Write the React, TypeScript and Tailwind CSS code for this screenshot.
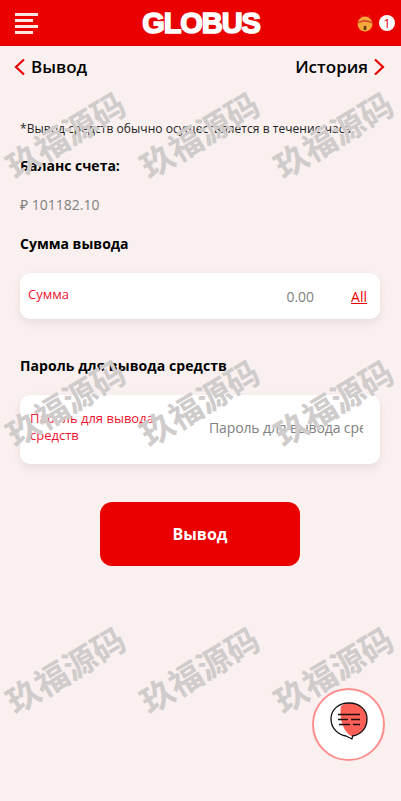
const wm = Array.from({ length: 9 });

function Menu() {
  return (
    <div className="flex w-[60px] flex-col items-start gap-[3px] pl-[15px]">
      <span className="block h-[3px] w-[23px] bg-[#ffe4e4]" />
      <span className="block h-[3px] w-[18px] bg-[#ffe4e4]" />
      <span className="block h-[3px] w-[23px] bg-[#ffe4e4]" />
      <span className="block h-[3px] w-[18px] bg-[#ffe4e4]" />
    </div>
  );
}

function Bell() {
  return (
    <svg width="16" height="18" viewBox="0 0 16 18" className="block">
      <path d="M5 3 L4 1 M11 3 L12 1" stroke="#d8342c" strokeWidth="1.2" />
      <circle cx="8" cy="10" r="7.5" fill="#f5a93a" />
      <path d="M1 8 Q8 4 15 8 L15 9.5 Q8 6 1 9.5 Z" fill="#d9482b" />
      <rect x="6.7" y="12" width="2.6" height="4" fill="#6b3a1a" />
    </svg>
  );
}

function Chevron({ right }: { right?: boolean }) {
  return (
    <svg width="12" height="18" viewBox="0 0 12 18" className="block">
      <path d={right ? "M2 1.5 L10 9 L2 16.5" : "M10 1.5 L2 9 L10 16.5"} fill="none" stroke="#eb0000" strokeWidth="2.2" />
    </svg>
  );
}

function ChatIcon() {
  return (
    <svg width="40" height="42" viewBox="0 0 40 42" className="-mt-[5px] block">
      <path d="M12 5 A16.5 16.5 0 1 1 22 35 C14 30 10 18 12 5 Z" fill="#fb5f55" />
      <path d="M20 2 C9 2 2 9 2 18 C2 28 10 34 17 35 L23 38 L23.5 35 C31 34 38 28 38 18 C38 9 31 2 20 2 Z" fill="none" stroke="#111" strokeWidth="1.3" strokeLinejoin="round" />
      <path d="M9 13.5 H31 M9 18.5 H19 M22 18.5 H31 M10 23.5 H21 M24 23.5 H31" stroke="#1b0d0d" strokeWidth="1.4" />
    </svg>
  );
}

export default function App() {
  return (
    <div className="relative h-[801px] w-[401px] overflow-hidden bg-[#f9f0ef] font-['Open_Sans','Noto_Sans',sans-serif] text-black">
      <header className="flex h-[46px] items-center justify-between bg-[#eb0000]">
        <Menu />
        <div className="pl-[1px] font-['Liberation_Sans',sans-serif] text-[29px] leading-none font-bold tracking-[-1.1px] text-white [-webkit-text-stroke:1.6px_white]">GLOBUS</div>
        <div className="flex w-[60px] items-center justify-end gap-[6px] pr-[6px]">
          <Bell />
          <span className="flex h-[16px] w-[16px] items-center justify-center rounded-full bg-white text-[13px] leading-none text-[#eb0000]">1</span>
        </div>
      </header>

      <nav className="flex h-[42px] items-center justify-between pl-[14px] pr-[16px]">
        <div className="flex items-center gap-[5px]">
          <Chevron />
          <span className="text-[17px] font-semibold">Вывод</span>
        </div>
        <div className="flex items-center gap-[5px]">
          <span className="text-[17px] font-semibold">История</span>
          <Chevron right />
        </div>
      </nav>

      <main className="pl-[20px] pr-[21px]">
        <p className="mt-[32px] text-[12px] leading-[18px] tracking-[0.05px] text-[#222]">*Вывод средств обычно осуществляется в течение часа.</p>
        <h2 className="mt-[18px] text-[14px] leading-[20px] font-bold">Баланс счета:</h2>
        <p className="mt-[19px] text-[14px] leading-[20px] text-[#808080]">₽ 101182.10</p>
        <h2 className="mt-[19px] text-[14px] leading-[20px] font-bold">Сумма вывода</h2>
        <div className="mt-[19px] flex h-[46px] items-center rounded-[10px] bg-white pl-[8px] pr-[13px] shadow-[0_4px_10px_rgba(0,0,0,0.08)]">
          <span className="-mt-[3px] text-[13px] text-[#f0142f]">Сумма</span>
          <span className="ml-auto text-[14px] text-[#808080]">0.00</span>
          <span className="ml-[37px] text-[14px] text-[#eb0000] underline">All</span>
        </div>
        <h2 className="mt-[37px] text-[14px] leading-[20px] tracking-[0.08px] font-bold">Пароль для вывода средств</h2>
        <div className="mt-[19px] flex h-[69px] items-center rounded-[10px] bg-white pl-[10px] pr-[17px] shadow-[0_4px_10px_rgba(0,0,0,0.08)]">
          <span className="-mt-[6px] w-[140px] text-[13px] leading-[17px] text-[#f0142f]">Пароль для вывода средств</span>
          <span className="-mt-[4px] ml-auto w-[154px] overflow-hidden whitespace-nowrap text-[14px] tracking-[-0.12px] text-[#808080]">Пароль для вывода средств</span>
        </div>
        <button className="mx-auto mt-[38px] flex h-[64px] w-[200px] items-center justify-center rounded-[12px] bg-[#eb0000] text-[16px] font-bold text-white">Вывод</button>
      </main>

      <div className="absolute left-[312px] top-[688px] flex h-[73px] w-[73px] items-center justify-center rounded-full border-[2px] border-[#ff8f8f] bg-white">
        <ChatIcon />
      </div>

      <div aria-hidden className="pointer-events-none absolute -left-[2px] top-[1px] grid auto-rows-[267.5px] grid-cols-[repeat(3,134px)]">
        {wm.map((_, i) => (
          <div key={i} className="flex items-center justify-center">
            <span className="-rotate-[31deg] font-['Noto_Sans_CJK_SC',sans-serif] text-[33px] leading-none font-bold whitespace-nowrap text-[#cfcccb]">玖福源码</span>
          </div>
        ))}
      </div>
    </div>
  );
}
